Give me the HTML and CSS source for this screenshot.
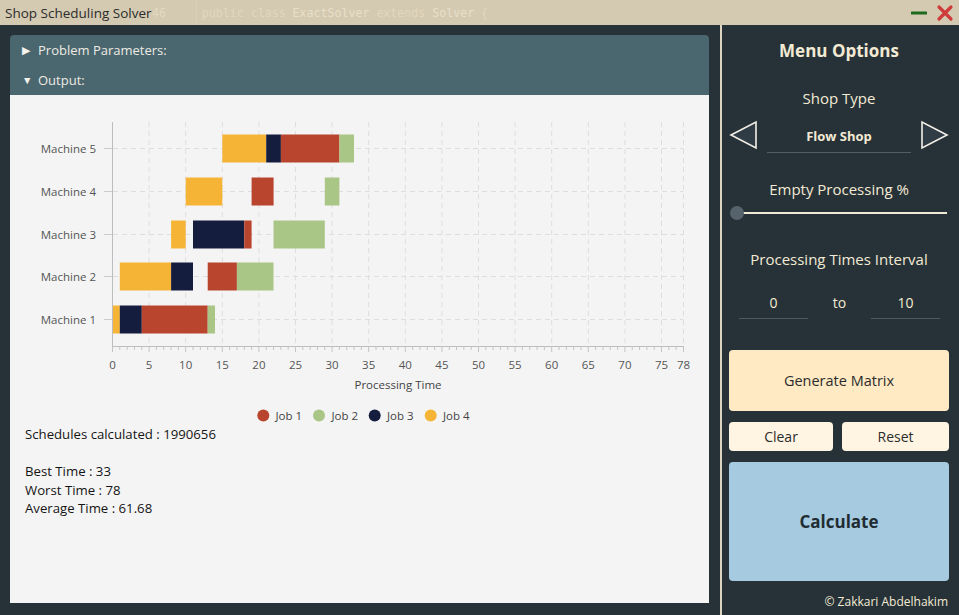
FILE: index.html
```html
<!DOCTYPE html>
<html>
<head>
<meta charset="utf-8">
<title>Shop Scheduling Solver</title>
<link rel="stylesheet" href="styles.css">
</head>
<body>
<div class="window">
  <div class="titlebar">
    <span class="title">Shop Scheduling Solver</span>
    <span class="ghost-num">46</span>
    <span class="ghost-sep"></span>
    <span class="ghost-code"><span class="kw">public class</span> <span class="nm">ExactSolver</span> <span class="kw">extends</span> <span class="nm">Solver</span> <span class="kw">{</span></span>
    <span class="win-btns">
      <svg class="btn-min" width="16" height="16" viewBox="0 0 16 16"><line x1="1" y1="8" x2="15" y2="8" stroke="#1d6a1d" stroke-width="3" stroke-linecap="round"/></svg>
      <svg class="btn-close" width="18" height="18" viewBox="0 0 18 18"><path d="M3 3 L15 15 M15 3 L3 15" stroke="#cf3a3a" stroke-width="3.2" stroke-linecap="round"/></svg>
    </span>
  </div>
  <div class="main">
    <div class="left">
      <div class="pane-head first"><span class="tri">&#9654;</span>Problem Parameters:</div>
      <div class="pane-head"><span class="tri down">&#9660;</span>Output:</div>
      <div class="content">
        <svg class="chart" width="699" height="330" viewBox="10 95 699 330" font-family="'Open Sans', sans-serif">
          <g stroke="#dedede" stroke-width="1" stroke-dasharray="5,4">
            <line x1="149.1" y1="122" x2="149.1" y2="346"/>
            <line x1="185.7" y1="122" x2="185.7" y2="346"/>
            <line x1="222.3" y1="122" x2="222.3" y2="346"/>
            <line x1="258.9" y1="122" x2="258.9" y2="346"/>
            <line x1="295.5" y1="122" x2="295.5" y2="346"/>
            <line x1="332.1" y1="122" x2="332.1" y2="346"/>
            <line x1="368.7" y1="122" x2="368.7" y2="346"/>
            <line x1="405.3" y1="122" x2="405.3" y2="346"/>
            <line x1="441.9" y1="122" x2="441.9" y2="346"/>
            <line x1="478.5" y1="122" x2="478.5" y2="346"/>
            <line x1="515.1" y1="122" x2="515.1" y2="346"/>
            <line x1="551.7" y1="122" x2="551.7" y2="346"/>
            <line x1="588.3" y1="122" x2="588.3" y2="346"/>
            <line x1="624.9" y1="122" x2="624.9" y2="346"/>
            <line x1="661.5" y1="122" x2="661.5" y2="346"/>
            <line x1="683.5" y1="122" x2="683.5" y2="346"/>
            <line x1="113" y1="148.5" x2="683.5" y2="148.5"/>
            <line x1="113" y1="191.5" x2="683.5" y2="191.5"/>
            <line x1="113" y1="234.5" x2="683.5" y2="234.5"/>
            <line x1="113" y1="276.5" x2="683.5" y2="276.5"/>
            <line x1="113" y1="319.5" x2="683.5" y2="319.5"/>
          </g>
          <g stroke="#cccccc" stroke-width="1">
            <line x1="104" y1="148.5" x2="112.5" y2="148.5"/>
            <line x1="104" y1="191.5" x2="112.5" y2="191.5"/>
            <line x1="104" y1="234.5" x2="112.5" y2="234.5"/>
            <line x1="104" y1="276.5" x2="112.5" y2="276.5"/>
            <line x1="104" y1="319.5" x2="112.5" y2="319.5"/>
          </g>
          <g id="bars">
            <rect x="222.3" y="134.5" width="43.9" height="28" fill="#f5b436"/>
            <rect x="266.2" y="134.5" width="14.7" height="28" fill="#151d3f"/>
            <rect x="280.9" y="134.5" width="58.5" height="28" fill="#b9452f"/>
            <rect x="339.4" y="134.5" width="14.6" height="28" fill="#a9c687"/>

            <rect x="185.7" y="177.5" width="36.6" height="28" fill="#f5b436"/>
            <rect x="251.6" y="177.5" width="22" height="28" fill="#b9452f"/>
            <rect x="324.8" y="177.5" width="14.6" height="28" fill="#a9c687"/>

            <rect x="171.1" y="220.5" width="14.6" height="28" fill="#f5b436"/>
            <rect x="193.0" y="220.5" width="51.3" height="28" fill="#151d3f"/>
            <rect x="244.3" y="220.5" width="7.3" height="28" fill="#b9452f"/>
            <rect x="273.5" y="220.5" width="51.3" height="28" fill="#a9c687"/>

            <rect x="119.8" y="262.5" width="51.3" height="28" fill="#f5b436"/>
            <rect x="171.1" y="262.5" width="21.9" height="28" fill="#151d3f"/>
            <rect x="207.7" y="262.5" width="29.2" height="28" fill="#b9452f"/>
            <rect x="236.9" y="262.5" width="36.6" height="28" fill="#a9c687"/>

            <rect x="112.5" y="305.5" width="7.3" height="28" fill="#f5b436"/>
            <rect x="119.8" y="305.5" width="22" height="28" fill="#151d3f"/>
            <rect x="141.8" y="305.5" width="65.9" height="28" fill="#b9452f"/>
            <rect x="207.7" y="305.5" width="7.3" height="28" fill="#a9c687"/>
          </g>
          <g stroke="#bdbdbd" stroke-width="1">
            <line x1="112.5" y1="122" x2="112.5" y2="346.5"/>
            <line x1="112" y1="346.5" x2="684" y2="346.5"/>
          </g>
          <g id="ticks" stroke="#c4c4c4" stroke-width="1"></g>
          <g fill="#555" font-size="11.5" text-anchor="end">
            <text x="96" y="152.5">Machine 5</text>
            <text x="96" y="195.5">Machine 4</text>
            <text x="96" y="238.5">Machine 3</text>
            <text x="96" y="280.5">Machine 2</text>
            <text x="96" y="323.5">Machine 1</text>
          </g>
          <g fill="#555" font-size="11.5" text-anchor="middle">
            <text x="112.5" y="368.5">0</text>
            <text x="149.1" y="368.5">5</text>
            <text x="185.7" y="368.5">10</text>
            <text x="222.3" y="368.5">15</text>
            <text x="258.9" y="368.5">20</text>
            <text x="295.5" y="368.5">25</text>
            <text x="332.1" y="368.5">30</text>
            <text x="368.7" y="368.5">35</text>
            <text x="405.3" y="368.5">40</text>
            <text x="441.9" y="368.5">45</text>
            <text x="478.5" y="368.5">50</text>
            <text x="515.1" y="368.5">55</text>
            <text x="551.7" y="368.5">60</text>
            <text x="588.3" y="368.5">65</text>
            <text x="624.9" y="368.5">70</text>
            <text x="661.5" y="368.5">75</text>
            <text x="683.5" y="368.5">78</text>
            <text x="398" y="388.5" fill="#444">Processing Time</text>
          </g>
          <g font-size="11.5" fill="#444">
            <circle cx="263.3" cy="415.5" r="6" fill="#b9452f"/>
            <text x="275.5" y="419.5">Job 1</text>
            <circle cx="319" cy="415.5" r="6" fill="#a9c687"/>
            <text x="331.5" y="419.5">Job 2</text>
            <circle cx="374.7" cy="415.5" r="6" fill="#151d3f"/>
            <text x="387" y="419.5">Job 3</text>
            <circle cx="430.7" cy="415.5" r="6" fill="#f5b436"/>
            <text x="443" y="419.5">Job 4</text>
          </g>
        </svg>
        <div class="stats">
          <div>Schedules calculated : 1990656</div>
          <div class="blank">&nbsp;</div>
          <div>Best Time : 33</div>
          <div>Worst Time : 78</div>
          <div>Average Time : 61.68</div>
        </div>
      </div>
    </div>
    <div class="right">
      <div class="menu-title">Menu Options</div>
      <div class="label shop-label">Shop Type</div>
      <div class="shop-row">
        <svg class="arrow" width="28" height="30" viewBox="0 0 28 30"><polygon points="2,15 27,2 27,28" fill="#2f3c45" stroke="#f3efe6" stroke-width="1.6" stroke-linejoin="miter"/></svg>
        <div class="shop-select">Flow Shop</div>
        <svg class="arrow" width="28" height="30" viewBox="0 0 28 30"><polygon points="26,15 1,2 1,28" fill="#2f3c45" stroke="#f3efe6" stroke-width="1.6" stroke-linejoin="miter"/></svg>
      </div>
      <div class="label empty-label">Empty Processing %</div>
      <div class="slider"><div class="track"></div><div class="thumb"></div></div>
      <div class="label interval-label">Processing Times Interval</div>
      <div class="interval-row">
        <div class="field">0</div>
        <div class="to">to</div>
        <div class="field">10</div>
      </div>
      <div class="btn generate">Generate Matrix</div>
      <div class="btn-row">
        <div class="btn small clear">Clear</div>
        <div class="btn small reset">Reset</div>
      </div>
      <div class="btn calculate">Calculate</div>
      <div class="footer">&copy; Zakkari Abdelhakim</div>
    </div>
  </div>
</div>
<script>
(function(){
  var g=document.getElementById('ticks');var ns='http://www.w3.org/2000/svg';
  for(var i=0;i<=78;i++){
    var x=112.5+7.32*i; if(i===78) x=683.5;
    var l=document.createElementNS(ns,'line');
    l.setAttribute('x1',x);l.setAttribute('x2',x);
    l.setAttribute('y1',346.5);l.setAttribute('y2',(i%5===0||i===78)?352:350);
    g.appendChild(l);
  }
})();
</script>
</body>
</html>
```
FILE: styles.css
```css
* { box-sizing: border-box; }
html, body { margin: 0; padding: 0; }
body {
  width: 959px;
  height: 615px;
  overflow: hidden;
  background: #263238;
  font-family: "Open Sans", "Noto Sans", sans-serif;
}
.window { width: 959px; height: 615px; display: flex; flex-direction: column; }

.titlebar {
  height: 25px;
  background: #d4cab2;
  display: flex;
  align-items: center;
  position: relative;
  flex: none;
}
.title {
  margin-left: 5px;
  font-size: 13.5px;
  color: #2b2b2b;
  width: 147px;
  white-space: nowrap;
}
.ghost-num {
  font-family: "DejaVu Sans Mono", monospace;
  font-size: 11.5px;
  color: #e3d9c0;
  margin-left: 0;
}
.ghost-sep {
  width: 1px;
  height: 25px;
  background: #d9d0b9;
  margin-left: 30px;
  margin-right: 5px;
}
.ghost-code {
  font-family: "DejaVu Sans Mono", monospace;
  font-size: 11.6px;
  white-space: pre;
}
.ghost-code .kw { color: #e2d7bd; }
.ghost-code .nm { color: #e8dfc8; }
.win-btns {
  margin-left: auto;
  margin-right: 5px;
  display: flex;
  align-items: center;
  gap: 9px;
}
.btn-min, .btn-close { display: block; }

.main { flex: 1; display: flex; min-height: 0; }
.left {
  width: 722px;
  padding: 10px 11px 12px 10px;
  border-right: 2px solid #ddd5c1;
  display: flex;
  flex-direction: column;
}
.pane-head {
  height: 30px;
  background: #4a666f;
  color: #eeebe3;
  font-size: 13px;
  display: flex;
  align-items: center;
  padding-left: 12px;
  flex: none;
}
.pane-head.first { border-radius: 4px 4px 0 0; }
.tri { font-size: 10.5px; margin-right: 7px; color: #f4f2ec; width: 9px; }
.content {
  flex: 1;
  background: #f4f4f4;
}
.chart { display: block; }
.stats {
  padding-left: 15px;
  font-size: 13.2px;
  line-height: 18.6px;
  color: #151515;
}

.right {
  flex: 1;
  padding: 0 10px 0 7px;
  color: #f3ead4;
  display: flex;
  flex-direction: column;
}
.menu-title {
  height: 50px;
  display: flex;
  align-items: center;
  justify-content: center;
  font-weight: bold;
  font-size: 17px;
}
.label {
  height: 24px;
  display: flex;
  align-items: center;
  justify-content: center;
  font-size: 15px;
  color: #f3ead4;
}
.shop-label { margin-top: 11px; }
.shop-row {
  margin-top: 10px;
  height: 33px;
  display: flex;
  align-items: flex-start;
  justify-content: space-between;
}
.arrow { display: block; margin-top: 0; }
.shop-select {
  width: 144px;
  height: 33px;
  border-bottom: 1px solid #525d65;
  display: flex;
  align-items: center;
  justify-content: center;
  font-weight: bold;
  font-size: 13px;
  padding-bottom: 1px;
}
.empty-label { margin-top: 24px; }
.slider {
  margin-top: 4px;
  height: 16px;
  position: relative;
}
.track {
  position: absolute;
  left: 8px;
  right: 2px;
  top: 7px;
  height: 2px;
  background: #f1ead8;
}
.thumb {
  position: absolute;
  left: 1px;
  top: 1px;
  width: 14px;
  height: 14px;
  border-radius: 50%;
  background: #56636c;
}
.interval-label { margin-top: 26px; }
.interval-row {
  margin-top: 15px;
  height: 33px;
  display: flex;
  align-items: stretch;
  padding: 0 9px 0 10px;
}
.field {
  width: 69px;
  border-bottom: 1px solid #4d5860;
  display: flex;
  align-items: center;
  justify-content: center;
  font-size: 14px;
}
.to {
  flex: 1;
  display: flex;
  align-items: center;
  justify-content: center;
  font-size: 14px;
}
.btn {
  display: flex;
  align-items: center;
  justify-content: center;
  border-radius: 4px;
  color: #2c2c2c;
  font-size: 14.5px;
}
.generate {
  margin-top: 31px;
  height: 61px;
  background: #ffeac3;
}
.btn-row {
  margin-top: 11px;
  height: 29px;
  display: flex;
  gap: 9px;
}
.btn.small {
  background: #fff5e2;
  font-size: 14px;
}
.btn.clear { flex: 104; }
.btn.reset { flex: 107; }
.calculate {
  margin-top: 11px;
  height: 119px;
  background: #a6cbe0;
  font-weight: bold;
  font-size: 17px;
  color: #222c33;
}
.footer {
  margin-top: 9px;
  height: 22px;
  display: flex;
  align-items: center;
  justify-content: flex-end;
  font-size: 12px;
  color: #f3ead4;
  padding-right: 1px;
}
```
